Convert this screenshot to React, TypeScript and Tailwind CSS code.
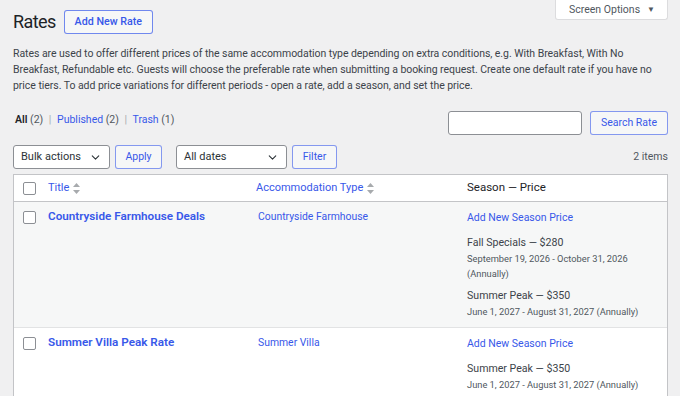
import { FC } from "react";
import { ChevronDown } from "lucide-react";

const blue = "text-[#3858e9]";

const SortIcon: FC = () => (
  <svg width="7" height="11" viewBox="0 0 7 11" className="ml-1 inline-block">
    <path d="M3.5 0L7 4H0z" fill="#a7aaad" />
    <path d="M3.5 11L7 7H0z" fill="#a7aaad" />
  </svg>
);

const Checkbox: FC = () => (
  <div className="h-[13px] w-[13px] rounded-[2px] border border-[#8c8f94] bg-white" />
);

const Select: FC<{ label: string; width: string }> = ({ label, width }) => (
  <div
    className={`flex h-6 items-center justify-between whitespace-nowrap rounded-[3px] border border-[#8c8f94] bg-white pl-[7px] pr-[7px] text-[11px] text-[#2c3338] ${width}`}
  >
    <span>{label}</span>
    <ChevronDown size={13} strokeWidth={2} className="text-[#2c3338]" />
  </div>
);

const Btn: FC<{ label: string; className?: string }> = ({ label, className = "" }) => (
  <div
    className={`flex h-6 items-center justify-center whitespace-nowrap rounded-[3px] border border-[#3858e9]/60 bg-[#f6f7f7] text-[10.5px] ${blue} ${className}`}
  >
    {label}
  </div>
);

interface Season {
  name: string;
  price: string;
  dates: string;
  wrap?: boolean;
}

const SeasonBlock: FC<{ s: Season; first: boolean }> = ({ s, first }) => (
  <div className={first ? "mt-[8px]" : "mt-[5px]"}>
    <div className="text-[10.6px] leading-[17px] text-[#3c434a]">
      {s.name} — {s.price}
    </div>
    {s.wrap ? (
      <>
        <div className="text-[9.3px] leading-[15px] text-[#50575e]">{s.dates}</div>
        <div className="text-[9.3px] leading-[16px] text-[#50575e]">(Annually)</div>
      </>
    ) : (
      <div className="text-[9.3px] leading-[15px] text-[#50575e]">{s.dates} (Annually)</div>
    )}
  </div>
);

const Row: FC<{ title: string; type: string; seasons: Season[]; striped?: boolean }> = ({
  title,
  type,
  seasons,
  striped,
}) => (
  <div className={`flex border-b border-[#e2e3e4] last:border-b-0 ${striped ? "bg-[#f6f7f7]" : "bg-white"}`}>
    <div className="w-[27px] shrink-0 pl-[9px] pt-[9px]">
      <Checkbox />
    </div>
    <div className={`w-[208px] shrink-0 pl-[7px] pt-[6px] text-[11.7px] font-semibold ${blue}`}>{title}</div>
    <div className={`w-[211px] shrink-0 pl-[9px] pt-[7px] text-[10.4px] ${blue}`}>{type}</div>
    <div className="flex-1 pb-[8px] pl-[7px] pt-[8px]">
      <div className={`text-[10.5px] leading-[16px] ${blue}`}>Add New Season Price</div>
      {seasons.map((s, i) => (
        <SeasonBlock key={s.name + s.dates} s={s} first={i === 0} />
      ))}
    </div>
  </div>
);

const App: FC = () => {
  return (
    <div className="h-[396px] w-[680px] overflow-hidden bg-[#f0f0f1] font-['Roboto',sans-serif] text-[#3c434a]">
      <div className="flex items-start justify-between">
        <div className="flex items-center gap-[8px] pl-[13px] pt-[10px]">
          <h1 className="text-[18px] leading-6 tracking-[-0.6px] text-[#1d2327]">Rates</h1>
          <div className={`flex h-6 items-center rounded-[3px] border border-[#3858e9]/70 bg-[#f6f7f7] px-[10px] text-[10.7px] font-medium ${blue}`}>
            Add New Rate
          </div>
        </div>
        <div className="mr-[12px] flex h-[20px] items-center gap-[7px] rounded-b-[3px] border border-t-0 border-[#dcdcde] bg-white pl-[13px] pr-[12px] text-[10.5px] text-[#50575e]">
          Screen Options
          <span className="text-[8px]">▼</span>
        </div>
      </div>

      <p className="mt-[12px] pl-[13px] pr-[12px] text-[10.5px] leading-[16px] tracking-[-0.05px] text-[#3c434a]">
        Rates are used to offer different prices of the same accommodation type depending on extra conditions, e.g. With
        Breakfast, With No Breakfast, Refundable etc. Guests will choose the preferable rate when submitting a booking
        request. Create one default rate if you have no price tiers. To add price variations for different periods -
        open a rate, add a season, and set the price.
      </p>

      <div className="mt-[17px] flex items-start justify-between pl-[15px] pr-[12px]">
        <div className="pt-[1px] text-[10.5px] leading-[16px] text-[#50575e]">
          <span className="font-semibold text-[#1d2327]">All</span> (2) <span className="mx-[3px] text-[#a7aaad]">|</span>{" "}
          <span className={blue}>Published</span> (2) <span className="mx-[3px] text-[#a7aaad]">|</span>{" "}
          <span className={blue}>Trash</span> (1)
        </div>
        <div className="flex items-center gap-[8px]">
          <div className="h-6 w-[134px] rounded-[3px] border border-[#8c8f94] bg-white" />
          <Btn label="Search Rate" className="w-[78px]" />
        </div>
      </div>

      <div className="mt-[10px] flex items-center pl-[13px] pr-[12px]">
        <Select label="Bulk actions" width="w-[97px]" />
        <Btn label="Apply" className="ml-[5px] w-[47px]" />
        <div className="ml-[14px]">
          <Select label="All dates" width="w-[111px]" />
        </div>
        <Btn label="Filter" className="ml-[5px] w-[45px]" />
        <div className="ml-auto text-[10.5px] text-[#50575e]">2 items</div>
      </div>

      <div className="ml-[13px] mr-[12px] mt-[5px] border border-[#c3c4c7] bg-white">
        <div className="flex h-[27px] items-center border-b border-[#c3c4c7] text-[11px]">
          <div className="w-[27px] shrink-0 pl-[9px]">
            <Checkbox />
          </div>
          <div className={`flex w-[208px] shrink-0 items-center pl-[7px] ${blue}`}>
            Title
            <SortIcon />
          </div>
          <div className={`flex w-[211px] shrink-0 items-center pl-[7px] ${blue}`}>
            Accommodation Type
            <SortIcon />
          </div>
          <div className="pl-[7px] text-[11.5px] text-[#1d2327]">Season — Price</div>
        </div>
        <Row
          striped
          title="Countryside Farmhouse Deals"
          type="Countryside Farmhouse"
          seasons={[
            { name: "Fall Specials", price: "$280", dates: "September 19, 2026 - October 31, 2026", wrap: true },
            { name: "Summer Peak", price: "$350", dates: "June 1, 2027 - August 31, 2027" },
          ]}
        />
        <Row
          title="Summer Villa Peak Rate"
          type="Summer Villa"
          seasons={[{ name: "Summer Peak", price: "$350", dates: "June 1, 2027 - August 31, 2027" }]}
        />
      </div>
    </div>
  );
};

export default App;
